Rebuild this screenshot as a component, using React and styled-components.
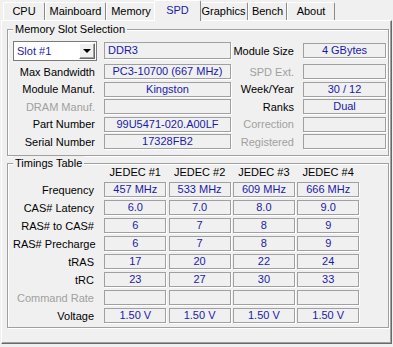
import styled, { createGlobalStyle } from 'styled-components'

const GlobalStyle = createGlobalStyle`
  html, body {
    margin: 0;
    padding: 0;
    background: #f0f0f0;
  }
  body {
    font-family: Tahoma, 'Liberation Sans', Arial, sans-serif;
    font-size: 11px;
  }
`

const tabs = [
  { name: 'CPU', width: 42 },
  { name: 'Mainboard', width: 61 },
  { name: 'Memory', width: 50 },
  { name: 'SPD', width: 43, active: true },
  { name: 'Graphics', width: 49 },
  { name: 'Bench', width: 39 },
  { name: 'About', width: 48 },
]

const slotRows = [
  { label: 'Max Bandwidth', value: 'PC3-10700 (667 MHz)', side: 'SPD Ext.', sideDim: true, sideValue: '' },
  { label: 'Module Manuf.', value: 'Kingston', side: 'Week/Year', sideValue: '30 / 12' },
  { label: 'DRAM Manuf.', dim: true, value: '', side: 'Ranks', sideValue: 'Dual' },
  { label: 'Part Number', value: '99U5471-020.A00LF', side: 'Correction', sideDim: true, sideValue: '' },
  { label: 'Serial Number', value: '17328FB2', side: 'Registered', sideDim: true, sideValue: '' },
]

const timings = [
  { label: 'Frequency', values: ['457 MHz', '533 MHz', '609 MHz', '666 MHz'] },
  { label: 'CAS# Latency', values: ['6.0', '7.0', '8.0', '9.0'] },
  { label: 'RAS# to CAS#', values: ['6', '7', '8', '9'] },
  { label: 'RAS# Precharge', values: ['6', '7', '8', '9'] },
  { label: 'tRAS', values: ['17', '20', '22', '24'] },
  { label: 'tRC', values: ['23', '27', '30', '33'] },
  { label: 'Command Rate', dim: true, values: ['', '', '', ''] },
  { label: 'Voltage', values: ['1.50 V', '1.50 V', '1.50 V', '1.50 V'] },
]

function App() {
  return (
    <Window>
      <GlobalStyle />
      <TabBar>
        {tabs.map(t => (
          <Tab key={t.name} $w={t.width} $active={t.active}>{t.name}</Tab>
        ))}
      </TabBar>
      <Panel>
        <Group $h={127} $pad='10px 5px 6px'>
          <Legend>Memory Slot Selection</Legend>
          <SlotGrid>
            <Combo>
              <span>Slot #1</span>
              <ComboButton><Arrow /></ComboButton>
            </Combo>
            <Field $h={17} $left>DDR3</Field>
            <Label>Module Size</Label>
            <Field>4 GBytes</Field>
            {slotRows.map(r => (
              <Row key={r.label}>
                <Label $dim={r.dim}>{r.label}</Label>
                <Field>{r.value}</Field>
                <Label $dim={r.sideDim}>{r.side}</Label>
                <Field>{r.sideValue}</Field>
              </Row>
            ))}
          </SlotGrid>
        </Group>
        <Group $h={165} $pad='0 5px 4px'>
          <Legend>Timings Table</Legend>
          <TimingGrid>
            <span />
            {['JEDEC #1', 'JEDEC #2', 'JEDEC #3', 'JEDEC #4'].map(h => (
              <Header key={h}>{h}</Header>
            ))}
            {timings.map(r => (
              <Row key={r.label}>
                <Label $dim={r.dim} $pr={8}>{r.label}</Label>
                {r.values.map((v, i) => (
                  <Field key={i}>{v}</Field>
                ))}
              </Row>
            ))}
          </TimingGrid>
        </Group>
      </Panel>
    </Window>
  )
}

const Window = styled.div`
  width: 393px;
  height: 347px;
  overflow: hidden;
  background: #f0f0f0;
  color: #000;
`

const TabBar = styled.div`
  display: flex;
  align-items: flex-end;
  height: 20px;
  padding-left: 3px;
`

const Tab = styled.div`
  position: relative;
  z-index: ${p => (p.$active ? 1 : 0)};
  box-sizing: border-box;
  width: ${p => p.$w + (p.$active ? 4 : 0)}px;
  height: ${p => (p.$active ? 21 : 18)}px;
  margin: 0 ${p => (p.$active ? -2 : 0)}px ${p => (p.$active ? -1 : 0)}px;
  border-top: 1px solid #fff;
  border-left: 1px solid #fff;
  border-right: 1px solid #8a8a8a;
  border-radius: 2px 2px 0 0;
  background: #f0f0f0;
  color: ${p => (p.$active ? '#1a1aa8' : '#000')};
  text-align: center;
  line-height: ${p => (p.$active ? 18 : 16)}px;
  white-space: nowrap;
`

const Panel = styled.div`
  box-sizing: border-box;
  width: 391px;
  height: 324px;
  margin-left: 1px;
  padding: 8px 2px 0 5px;
  border-top: 1px solid #fff;
  border-left: 1px solid #fff;
  border-right: 1px solid #696969;
  border-bottom: 1px solid #696969;
  box-shadow: inset -1px -1px 0 #a0a0a0;
`

const Group = styled.section`
  position: relative;
  box-sizing: border-box;
  height: ${p => p.$h}px;
  padding: ${p => p.$pad};
  border: 1px solid #a0a0a0;
  box-shadow: inset 1px 1px 0 #fff, 1px 1px 0 #fff;

  & + & {
    margin-top: 7px;
  }
`

const Legend = styled.span`
  position: absolute;
  top: -8px;
  left: 5px;
  padding: 0 2px;
  line-height: 14px;
  background: #f0f0f0;
`

const SlotGrid = styled.div`
  display: grid;
  grid-template-columns: 91px 127px 72px 83px;
  grid-template-rows: 21.5px repeat(5, 15px);
  row-gap: 2.5px;
  align-items: center;
`

const TimingGrid = styled.div`
  display: grid;
  grid-template-columns: 89px repeat(4, 62px);
  grid-template-rows: 15px repeat(8, 15px);
  column-gap: 2.3px;
  row-gap: 3px;
  align-items: center;
`

const Row = styled.div`
  display: contents;
`

const Label = styled.span`
  padding-right: ${p => p.$pr ?? 9}px;
  text-align: right;
  white-space: nowrap;
  color: ${p => (p.$dim ? '#a0a0a0' : '#000')};
`

const Header = styled.span`
  align-self: end;
  text-align: center;
  line-height: 13px;
  color: #000;
`

const Field = styled.div`
  box-sizing: border-box;
  height: ${p => p.$h ?? 15}px;
  padding: 0 ${p => (p.$left ? 3 : 2)}px;
  border: 1px solid #a0a0a0;
  box-shadow: 1px 1px 0 #fff;
  color: #1a1aa8;
  text-align: ${p => (p.$left ? 'left' : 'center')};
  line-height: ${p => (p.$h ?? 15) - 2}px;
  white-space: nowrap;
  overflow: hidden;
`

const Combo = styled.div`
  box-sizing: border-box;
  display: flex;
  align-items: center;
  width: 84px;
  height: 20px;
  padding: 1px 1px 1px 3px;
  border: 1px solid #7a7a7a;
  background: #fff;
  color: #1a1aa8;
`

const ComboButton = styled.span`
  box-sizing: border-box;
  display: flex;
  align-items: center;
  justify-content: center;
  width: 16px;
  height: 16px;
  margin-left: auto;
  border-top: 1px solid #fff;
  border-left: 1px solid #fff;
  border-right: 1px solid #696969;
  border-bottom: 1px solid #696969;
  background: #f0f0f0;
  box-shadow: inset -1px -1px 0 #a0a0a0;
`

const Arrow = styled.span`
  width: 0;
  height: 0;
  border-left: 4px solid transparent;
  border-right: 4px solid transparent;
  border-top: 4px solid #000;
`

export default App
